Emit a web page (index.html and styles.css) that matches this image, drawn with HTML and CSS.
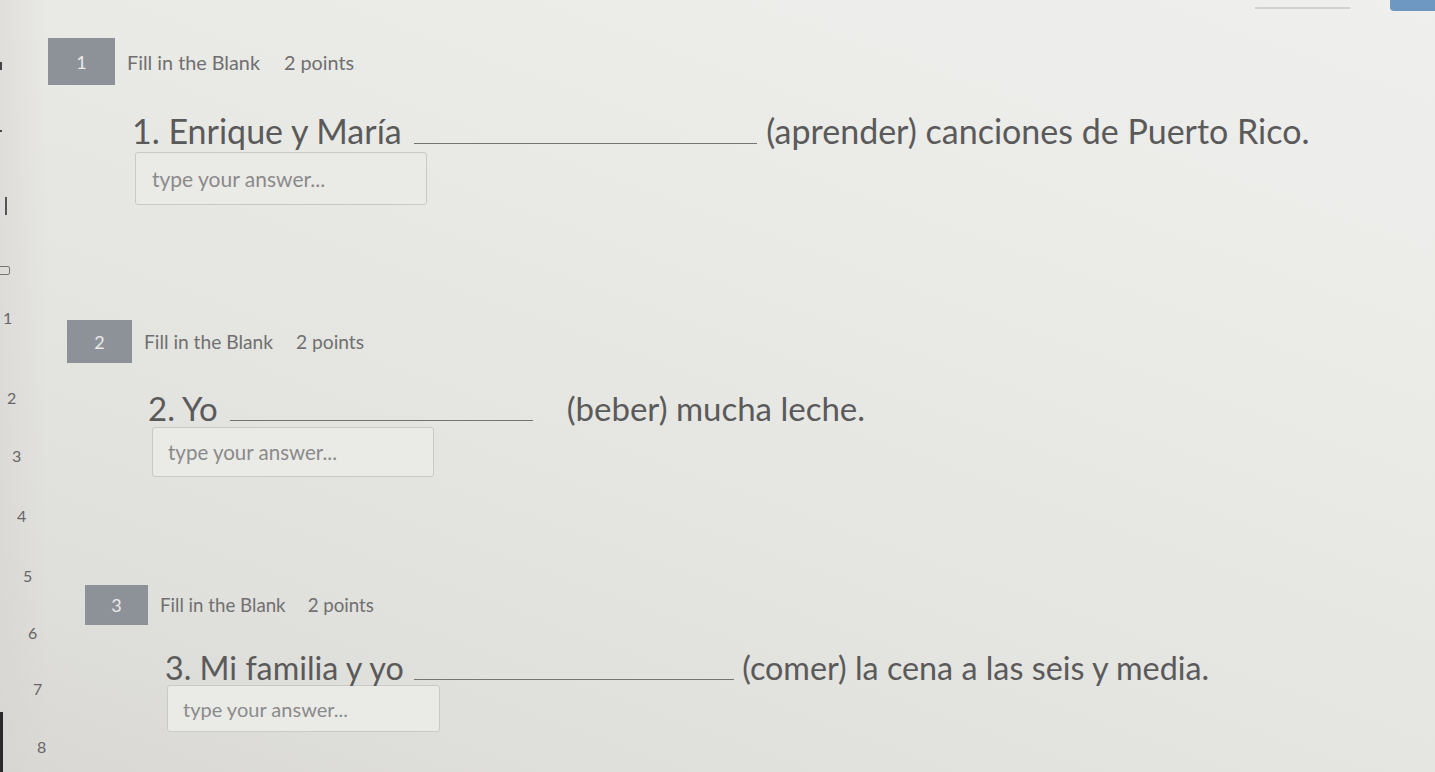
FILE: index.html
```html
<!DOCTYPE html>
<html lang="es">
<head>
<meta charset="utf-8">
<title>Quiz</title>
<link rel="stylesheet" href="styles.css">
</head>
<body>
<div class="page">
  <div class="topbar"><span class="top-line"></span><span class="top-btn"></span></div>
  <aside class="gutter">
    <span class="mark mark-a"></span>
    <span class="mark mark-b"></span>
    <span class="mark mark-c"></span>
    <span class="mark-icon"></span>
    <ol class="nums">
      <li class="n1">1</li>
      <li class="n2">2</li>
      <li class="n3">3</li>
      <li class="n4">4</li>
      <li class="n5">5</li>
      <li class="n6">6</li>
      <li class="n7">7</li>
      <li class="n8">8</li>
    </ol>
    <span class="edge"></span>
  </aside>
  <main class="main">
    <section class="q q1">
      <div class="q-head">
        <span class="badge">1</span>
        <span class="q-type">Fill in the Blank</span>
        <span class="q-pts">2 points</span>
      </div>
      <div class="q-body">
        <p class="q-text">1. Enrique y María <span class="blank"></span> <span class="after">(aprender) canciones de Puerto Rico.</span></p>
        <div class="answer">type your answer...</div>
      </div>
    </section>
    <section class="q q2">
      <div class="q-head">
        <span class="badge">2</span>
        <span class="q-type">Fill in the Blank</span>
        <span class="q-pts">2 points</span>
      </div>
      <div class="q-body">
        <p class="q-text">2. Yo <span class="blank"></span> <span class="after">(beber) mucha leche.</span></p>
        <div class="answer">type your answer...</div>
      </div>
    </section>
    <section class="q q3">
      <div class="q-head">
        <span class="badge">3</span>
        <span class="q-type">Fill in the Blank</span>
        <span class="q-pts">2 points</span>
      </div>
      <div class="q-body">
        <p class="q-text">3. Mi familia y yo <span class="blank"></span> <span class="after">(comer) la cena a las seis y media.</span></p>
        <div class="answer">type your answer...</div>
      </div>
    </section>
  </main>
</div>
</body>
</html>
```
FILE: styles.css
```css
* { box-sizing: border-box; }
html, body { margin: 0; padding: 0; }
body {
  width: 1435px;
  height: 772px;
  overflow: hidden;
  font-family: Lato, "Open Sans", sans-serif;
  color: #5d5d5d;
  background: linear-gradient(200deg, #efefed 0%, #e9e9e6 40%, #e0e0dc 80%, #d9d8d4 100%);
}
.page {
  position: relative;
  display: flex;
  height: 772px;
}
.topbar {
  position: absolute;
  top: 0;
  right: 0;
  width: 200px;
  height: 12px;
}
.top-line {
  position: absolute;
  left: 20px;
  top: 7px;
  width: 95px;
  height: 2px;
  background: #d0d1cd;
}
.top-btn {
  position: absolute;
  right: 0;
  top: 0;
  width: 45px;
  height: 11px;
  background: #6e97c2;
  border-radius: 0 0 0 4px;
}
.gutter {
  position: relative;
  width: 48px;
  flex: none;
  background: linear-gradient(90deg, rgba(214, 210, 208, 0.45), rgba(214, 210, 208, 0));
}
.edge {
  position: absolute;
  left: 0;
  top: 712px;
  width: 3px;
  height: 60px;
  background: #2a2a2a;
}
.mark { position: absolute; left: 0; background: #444; }
.mark-a { top: 62px; width: 2px; height: 8px; }
.mark-b { top: 130px; width: 2px; height: 2px; }
.mark-c { top: 197px; left: 5px; width: 2px; height: 18px; background: #555; }
.mark-icon {
  position: absolute;
  left: -2px;
  top: 266px;
  width: 12px;
  height: 9px;
  border: 1px solid #777;
  border-radius: 2px;
}
.nums {
  list-style: none;
  margin: 0;
  padding: 307px 0 0 0;
  font-size: 16px;
  color: #666;
}
.nums li { height: 58px; line-height: 22px; }
.n1 { padding-left: 3px; height: 80px !important; }
.n2 { padding-left: 7px; }
.n3 { padding-left: 12px; height: 60px !important; }
.n4 { padding-left: 17px; height: 60px !important; }
.n5 { padding-left: 23px; height: 57px !important; }
.n6 { padding-left: 28px; height: 56px !important; }
.n7 { padding-left: 33px; }
.n8 { padding-left: 37px; }

.main {
  flex: 1;
  display: flex;
  flex-direction: column;
  padding-top: 38px;
}
.q-head {
  display: flex;
  align-items: center;
}
.badge {
  display: flex;
  align-items: center;
  justify-content: center;
  flex: none;
  background: #8d9298;
  color: #e9eaea;
  font-size: 18px;
}
.q-type { color: #707070; }
.q-pts { color: #707070; }
.q-text {
  margin: 0;
  color: #5a5a5a;
  white-space: nowrap;
}
.blank {
  display: inline-block;
  border-bottom: 1.5px solid #747474;
  vertical-align: baseline;
}
.answer {
  border: 1px solid #c9c9c6;
  border-radius: 3px;
  background: #eaeae7;
  color: #8a8a8a;
  display: flex;
  align-items: center;
  white-space: nowrap;
}

/* Question 1 */
.q1 .badge { width: 67px; height: 47px; }
.q1 .q-type { margin-left: 12px; font-size: 19.8px; }
.q1 .q-pts { margin-left: 24px; font-size: 19.8px; }
.q1 .q-body { margin-left: 84px; margin-top: 27px; }
.q1 .q-text { font-size: 34px; line-height: 38px; }
.q1 .blank { width: 343px; margin-left: 4px; }
.q1 .answer { margin-left: 3px; margin-top: 2px; width: 292px; height: 53px; padding-left: 16px; font-size: 21px; }

/* Question 2 */
.q2 { margin-left: 19px; margin-top: 115px; }
.q2 .badge { width: 65px; height: 43px; }
.q2 .q-type { margin-left: 12px; font-size: 19.2px; }
.q2 .q-pts { margin-left: 23px; font-size: 19.2px; }
.q2 .q-body { margin-left: 81px; margin-top: 27px; }
.q2 .q-text { font-size: 33px; line-height: 36px; }
.q2 .blank { width: 303px; margin-left: 4px; margin-right: 25px; }
.q2 .answer { margin-left: 4px; margin-top: 1px; width: 282px; height: 50px; padding-left: 15px; font-size: 20.5px; }

/* Question 3 */
.q3 { margin-left: 37px; margin-top: 108px; }
.q3 .badge { width: 63px; height: 40px; }
.q3 .q-type { margin-left: 12px; font-size: 18.7px; }
.q3 .q-pts { margin-left: 22px; font-size: 18.7px; }
.q3 .q-body { margin-left: 80px; margin-top: 26px; }
.q3 .q-text { font-size: 32.3px; line-height: 34px; }
.q3 .blank { width: 320px; margin-left: 2px; }
.q3 .answer { margin-left: 2px; margin-top: 0; width: 273px; height: 47px; padding-left: 15px; font-size: 20px; }
```
